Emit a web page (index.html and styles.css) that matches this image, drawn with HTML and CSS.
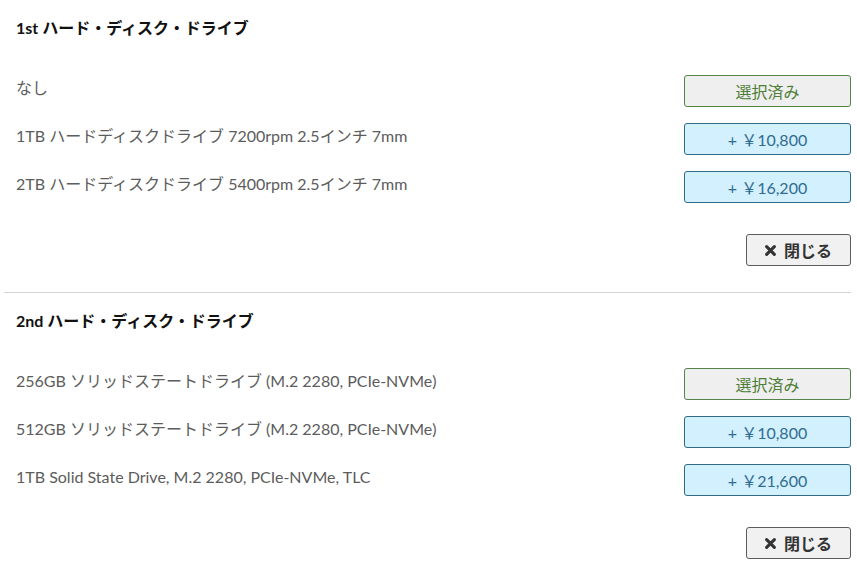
FILE: index.html
```html
<!DOCTYPE html>
<html lang="ja">
<head>
  <meta charset="UTF-8">
  <title>ハード・ディスク・ドライブ</title>
  <link rel="stylesheet" href="styles.css">
</head>
<body>
  <div class="wrap">
    <section class="opt">
      <h2>1st ハード・ディスク・ドライブ</h2>
      <ul class="rows">
        <li><span class="label">なし</span><button class="btn sel">選択済み</button></li>
        <li><span class="label">1TB ハードディスクドライブ 7200rpm 2.5インチ 7mm</span><button class="btn price">+ ￥10,800</button></li>
        <li><span class="label">2TB ハードディスクドライブ 5400rpm 2.5インチ 7mm</span><button class="btn price">+ ￥16,200</button></li>
      </ul>
      <div class="foot">
        <button class="btn close"><svg viewBox="0 0 10 10" width="11" height="11"><path d="M1.5 1.5 L8.5 8.5 M8.5 1.5 L1.5 8.5" stroke="#333" stroke-width="2.8" stroke-linecap="round"/></svg>閉じる</button>
      </div>
    </section>
    <section class="opt">
      <h2>2nd ハード・ディスク・ドライブ</h2>
      <ul class="rows">
        <li><span class="label">256GB ソリッドステートドライブ (M.2 2280, PCIe-NVMe)</span><button class="btn sel">選択済み</button></li>
        <li><span class="label">512GB ソリッドステートドライブ (M.2 2280, PCIe-NVMe)</span><button class="btn price">+ ￥10,800</button></li>
        <li><span class="label">1TB Solid State Drive, M.2 2280, PCIe-NVMe, TLC</span><button class="btn price">+ ￥21,600</button></li>
      </ul>
      <div class="foot">
        <button class="btn close"><svg viewBox="0 0 10 10" width="11" height="11"><path d="M1.5 1.5 L8.5 8.5 M8.5 1.5 L1.5 8.5" stroke="#333" stroke-width="2.8" stroke-linecap="round"/></svg>閉じる</button>
      </div>
    </section>
  </div>
</body>
</html>
```

FILE: styles.css
```css
body {
  margin: 0;
  background: #fff;
  font-family: "Lato", "Noto Sans CJK JP", sans-serif;
  color: #5c5c5c;
}

.wrap {
  width: 847px;
  padding-left: 4px;
}

.opt {
  padding: 18px 0 26px 12px;
}

.opt + .opt {
  border-top: 1px solid #d4d4d4;
}

h2 {
  margin: 0 0 37px;
  font-size: 16px;
  line-height: 20px;
  font-weight: bold;
  color: #111;
}

.rows {
  list-style: none;
  margin: 0;
  padding: 0;
  display: flex;
  flex-direction: column;
  gap: 16px;
}

.rows li {
  display: flex;
  justify-content: space-between;
  align-items: flex-start;
}

.label {
  font-size: 16px;
  line-height: 20px;
  padding-top: 3px;
}

.btn {
  font-family: "Lato", "Noto Sans CJK JP", sans-serif;
  font-size: 16px;
  height: 32px;
  border-radius: 3px;
  padding: 0;
  cursor: pointer;
}

.sel, .price {
  width: 167px;
}

.sel {
  background: #efefef;
  border: 1px solid #55844a;
  color: #4f7e38;
}

.price {
  background: #d3f0ff;
  border: 1px solid #2f6b87;
  color: #2f6c8f;
}

.foot {
  display: flex;
  justify-content: flex-end;
  margin-top: 31px;
}

.close {
  width: 105px;
  background: #f1f1f1;
  border: 1px solid #5c5c5c;
  color: #333;
  font-weight: bold;
  display: flex;
  align-items: center;
  justify-content: center;
  gap: 8px;
}
```
